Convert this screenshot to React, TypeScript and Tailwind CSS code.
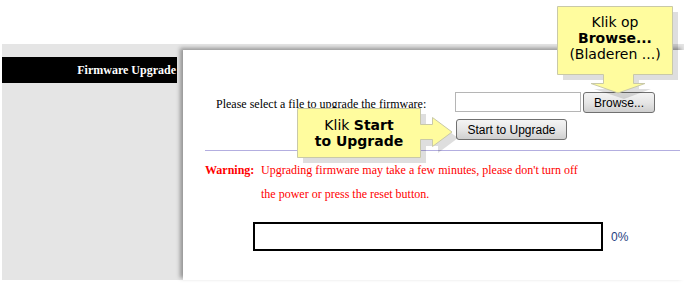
const serif = "font-['Liberation_Serif','Times_New_Roman',serif]";
const sans = "font-['Liberation_Sans',Arial,sans-serif]";
const verdana = "font-['DejaVu_Sans',Verdana,sans-serif]";

const btn =
  "h-[21px] rounded-[3px] border border-[#707070] bg-gradient-to-b from-[#f4f4f4] via-[#e6e6e6] to-[#cfcfcf] text-[12px] text-black leading-none " +
  sans;

const Callouts = () => (
  <svg className="pointer-events-none absolute left-0 top-0" width="684" height="287">
    {/* Browse callout */}
    <path
      d="M563 12 H678 V80 H639 V89 H651 L624 99 L594 89 H609 V80 H563 Z"
      fill="#000"
      opacity="0.13"
    />
    <path
      d="M557.5 6.5 H672.5 V74.5 H633.5 V83.5 H645 L618 93 L591 83.5 H603.5 V74.5 H557.5 Z"
      fill="#fffc9e"
      stroke="#c9c9a8"
      strokeWidth="1"
    />
    {/* Start callout */}
    <path
      d="M303 114 H426 V130 H438 V123 L458 138 L438 153 V146 H426 V163 H303 Z"
      fill="#000"
      opacity="0.13"
    />
    <path
      d="M297.5 108.5 H420.5 V124.5 H432.5 V117.5 L452 132 L432.5 146.5 V139.5 H420.5 V157.5 H297.5 Z"
      fill="#fffc9e"
      stroke="#c9c9a8"
      strokeWidth="1"
    />
  </svg>
);

export default function App() {
  return (
    <div className="relative h-[287px] w-[684px] overflow-hidden bg-white">
      <div className="pt-[44px]">
        <div className="ml-[2px] flex h-[236px] bg-[#e5e5e5]">
          <div className="w-[175px] shrink-0 pt-[13px]">
            <div
              className={`flex h-[26px] items-center justify-end bg-black pr-[1px] text-[12px] font-bold text-white ${serif}`}
            >
              Firmware Upgrade
            </div>
          </div>
          <div className="mt-[6px] ml-[6px] flex-1 bg-white shadow-[-3px_-2px_4px_rgba(0,0,0,0.35)]">
            <div className="grid grid-cols-[272px_1fr] pt-[42px]">
              <div className={`pl-[33px] pt-[3px] text-[12px] text-black ${serif}`}>
                Please select a file to upgrade the firmware:
              </div>
              <div className="flex flex-col gap-[6px]">
                <div className="flex gap-[2px]">
                  <div className="h-[20px] w-[126px] border border-[#b5b5b5] bg-white" />
                  <button className={`${btn} w-[72px]`}>Browse...</button>
                </div>
                <button className={`${btn} ml-[1px] w-[111px]`}>Start to Upgrade</button>
              </div>
            </div>
            <div className="mt-[10px] mr-[4px] ml-[22px] h-px bg-[#b3aee0]" />
            <div className={`mt-[7px] flex text-[12px] leading-[24px] text-[#ff0000] ${serif}`}>
              <div className="w-[78px] shrink-0 pl-[22px] font-bold">Warning:</div>
              <div className="w-[330px]">
                Upgrading firmware may take a few minutes, please don't turn off the power or press
                the reset button.
              </div>
            </div>
            <div className="mt-[16px] ml-[70px] flex items-center gap-[8px]">
              <div className="h-[29px] w-[350px] border-2 border-black bg-white" />
              <span className={`text-[12px] text-[#1f3f7f] ${sans}`}>0%</span>
            </div>
          </div>
        </div>
      </div>
      <Callouts />
      <div
        className={`absolute left-[557px] top-[14px] w-[116px] text-center text-[14px] leading-[16px] text-black ${verdana}`}
      >
        <div>Klik op</div>
        <div className="font-bold">Browse...</div>
        <div>(Bladeren ...)</div>
      </div>
      <div
        className={`absolute left-[297px] top-[117px] w-[124px] text-center text-[14px] leading-[16px] text-black ${verdana}`}
      >
        <div>
          Klik <span className="font-bold">Start</span>
        </div>
        <div className="font-bold">to Upgrade</div>
      </div>
    </div>
  );
}
